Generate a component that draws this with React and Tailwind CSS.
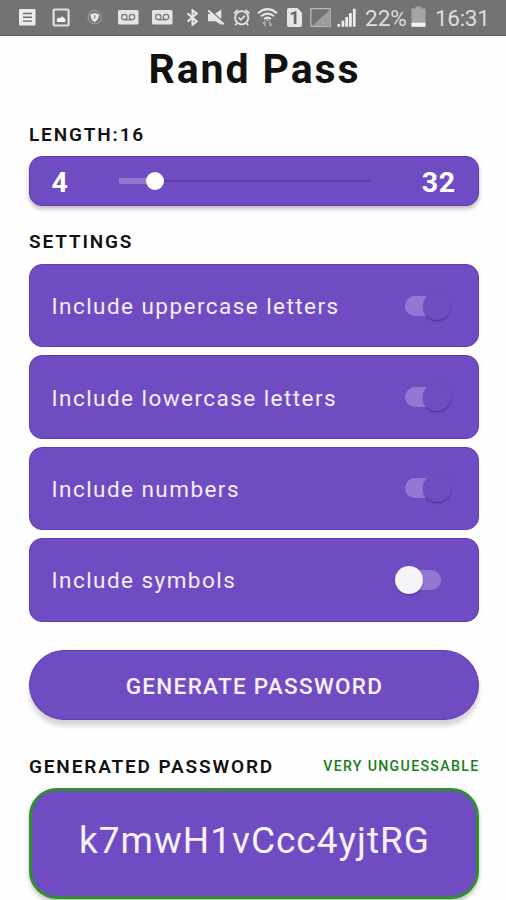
import React from "react";

function StatusBar() {
  return (
    <header className="flex h-[35.5px] items-start border-b border-[#5c5c5c] bg-[#737373] pl-[19px] text-[#dedede]">
      <svg className="mt-[9px] h-[17px] w-[17px] shrink-0" viewBox="0 0 17 17">
        <rect width="16.5" height="16.5" rx="1" fill="#ececec" />
        <path d="M4 4.5h9M4 8.3h9M4 12.1h9" stroke="#6b6b6b" strokeWidth="1.4" />
      </svg>
      <svg className="mt-2 ml-4 h-[19px] w-[18px] shrink-0" viewBox="0 0 18 19">
        <rect x="1.6" y="1.5" width="15" height="16" rx="1" fill="none" stroke="#e0e0e0" strokeWidth="2.2" />
        <path d="M4.8 14V11l2-1.6 1.3.8 2-2 3.3 3V14z" fill="#f5f5f5" />
      </svg>
      <svg className="mt-[10px] ml-[17px] h-[15px] w-[15px] shrink-0" viewBox="0 0 15 15">
        <circle cx="7.7" cy="7.3" r="6.6" fill="none" stroke="#a5a5a5" strokeWidth="1" />
        <path d="M7.7 3l4.3 1.3c0 4-1.3 6-4.3 8-3-2-4.3-4-4.3-8z" fill="#e8e8e8" />
        <path d="M7.7 5.2v3" stroke="#888" strokeWidth="1.4" />
      </svg>
      <Voicemail className="ml-4" />
      <Voicemail className="ml-[13px]" />
      <svg className="mt-[9px] ml-[13px] h-[17px] w-[13px] shrink-0" viewBox="0 0 13 17">
        <path d="M1.5 4.2l9.2 8.2-4.2 3.4V1.2l4.2 3.4-9.2 8.2" fill="none" stroke="#e6e6e6" strokeWidth="2" />
      </svg>
      <svg className="mt-[9px] ml-2 h-[17px] w-[18px] shrink-0" viewBox="0 0 18 17">
        <path d="M1 5h3.5l9.8 8.4V16L8.6 12.2H1zM8 4.8L14.3.5v9.4z" fill="#e6e6e6" />
        <path d="M1.2 1.5l15.6 13.8" stroke="#e6e6e6" strokeWidth="2.2" />
      </svg>
      <svg className="mt-[9px] ml-2 h-[17px] w-[18px] shrink-0" viewBox="0 0 18 17">
        <circle cx="8.7" cy="8.8" r="6.6" fill="none" stroke="#e6e6e6" strokeWidth="1.8" />
        <path d="M1 4.3L4.8.9M16.4 4.3L12.6.9M3.7 14.2l-1.5 2M13.7 14.2l1.5 2" stroke="#e6e6e6" strokeWidth="1.8" />
        <path d="M5.4 8.5l2.5 2.3 4-4.2" fill="none" stroke="#e6e6e6" strokeWidth="1.6" />
      </svg>
      <svg className="mt-2 ml-[6px] h-[19px] w-[21px] shrink-0" viewBox="0 0 21 19">
        <path d="M1 5.2q9.5-8 19 0M4 8.2q6.5-5.2 13 0M7 11q3.5-2.6 7 0" fill="none" stroke="#e6e6e6" strokeWidth="2.1" />
        <path d="M10.5 11.2l1.8 1.6H8.7z" fill="#e6e6e6" />
        <path d="M8 18.3v-4.5M5.8 15.6L8 13.4M12.8 13.4v4.5M15 15.8l-2.2 2.3" stroke="#a9a9a9" strokeWidth="1.7" />
      </svg>
      <div className="mt-2 ml-[9px] flex h-[19px] w-[15px] shrink-0 items-center justify-center rounded-[2px] bg-[#e6e6e6] text-[18px] leading-none font-bold text-[#666] [clip-path:polygon(0_0,70%_0,100%_25%,100%_100%,0_100%)]">
        1
      </div>
      <svg className="mt-2 ml-2 h-[19px] w-[21px] shrink-0" viewBox="0 0 21 19">
        <rect x=".8" y=".6" width="19.4" height="17.8" fill="none" stroke="#b8b8b8" strokeWidth="1.3" />
        <path d="M2.5 17.8L19.5 2v15.8z" fill="#9d9d9d" />
      </svg>
      <svg className="mt-2 ml-[6px] h-[19px] w-[19px] shrink-0" viewBox="0 0 19 19">
        <path d="M.5 16h2.6v2.8H.5zM4.5 12.7h2.8v6.1H4.5zM8.3 8.9h2.8v9.9H8.3zM12 4.9h2.8v13.9H12zM15.9.8h2.7v18h-2.7z" fill="#eee" />
      </svg>
      <span className="mt-1 ml-[9px] w-[42px] text-[22.5px] leading-7 whitespace-nowrap">22%</span>
      <svg className="mt-[6px] ml-[4px] h-[21px] w-[15px] shrink-0" viewBox="0 0 15 21">
        <path d="M.5 2.5h4V.6h6v1.9h4v18.2H.5z" fill="#a5a5a5" />
        <path d="M.5 16.8h14v3.9H.5z" fill="#f4f4f4" />
      </svg>
      <span className="mt-1 ml-[9px] text-[22.5px] leading-7 tracking-[-0.3px] whitespace-nowrap">16:31</span>
    </header>
  );
}

function Voicemail({ className }) {
  return (
    <svg className={`mt-[10px] h-[15px] w-[21px] shrink-0 ${className}`} viewBox="0 0 21 15">
      <rect width="20.5" height="14.5" rx="1.5" fill="#e4e4e4" />
      <circle cx="6.3" cy="7" r="2.7" fill="none" stroke="#777" strokeWidth="1.2" />
      <circle cx="14" cy="7" r="2.7" fill="none" stroke="#777" strokeWidth="1.2" />
      <path d="M6.3 9.8H14" stroke="#777" strokeWidth="1.2" />
    </svg>
  );
}

function Toggle({ on }) {
  return (
    <span
      className={
        on
          ? "mr-[37px] flex h-5 w-9 items-center justify-end rounded-full bg-[#9278d2]"
          : "mr-[37px] flex h-5 w-9 items-center rounded-full bg-[#9278d2]"
      }
    >
      <span
        className={
          on
            ? "-mr-[10px] size-7 shrink-0 rounded-full bg-[#704cc3] shadow-[0_1.5px_1.5px_rgba(50,20,110,0.45)]"
            : "-ml-[10px] size-7 shrink-0 rounded-full bg-[#f5f4f6] shadow-[0_1px_1.5px_rgba(50,20,110,0.5)]"
        }
      />
    </span>
  );
}

const settings = [
  { label: "Include uppercase letters", on: true },
  { label: "Include lowercase letters", on: true },
  { label: "Include numbers", on: true },
  { label: "Include symbols", on: false },
];

export default function App() {
  return (
    <div className="h-[900px] w-[506px] overflow-hidden bg-[#fefefe] font-['Roboto',sans-serif] text-[#111]">
      <StatusBar />
      <main className="flex flex-col pr-[27.5px] pl-[28.5px]">
        <h1 className="mt-[9.9px] h-12 pl-[2px] text-center text-[41px] leading-[48px] font-bold tracking-[1.9px] whitespace-nowrap">Rand Pass</h1>

        <h2 className="mt-[30px] h-6 pl-[0.5px] text-[19px] leading-6 font-semibold tracking-[1.85px]">LENGTH:16</h2>
        <section className="mt-[9.1px] flex h-[49.5px] items-center rounded-[13px] border border-[#6239b8] bg-[#704cc3] px-[22px] text-[28.5px] font-bold text-white shadow-[0_3px_4px_rgba(0,0,0,0.25)]">
          <span className="w-[67.5px] pt-[3px] leading-8">4</span>
          <div className="flex w-[251px] items-center">
            <div className="h-[6px] w-[27px] bg-[#9278d2]" />
            <div className="size-[18px] rounded-full bg-white" />
            <div className="h-[2px] flex-1 bg-[#5c3da3]" />
          </div>
          <span className="ml-auto pt-[3px] leading-8 tracking-[0.5px]">32</span>
        </section>

        <h2 className="mt-[24.5px] h-6 pl-[0.5px] text-[19px] leading-6 font-semibold tracking-[1.85px]">SETTINGS</h2>
        <div className="mt-[9.4px] flex flex-col gap-[7.8px]">
          {settings.map((s) => (
            <div key={s.label} className="flex h-[83.6px] items-center justify-between rounded-[13px] border border-[#6239b8] bg-[#704cc3] pl-[22px] text-[22.5px] tracking-[1.45px] text-[#f3eefb]">
              <span className="pt-[3px]">{s.label}</span>
              <Toggle on={s.on} />
            </div>
          ))}
        </div>

        <button className="mt-[28.6px] h-[70px] rounded-full border border-[#6239b8] bg-[#704cc3] pt-[3px] pl-[2px] text-[22.5px] font-medium tracking-[1.3px] text-[#f6f1fd] shadow-[0_6px_4px_rgba(0,0,0,0.16)]">
          GENERATE PASSWORD
        </button>

        <div className="mt-[34.4px] flex h-6 items-center justify-between pl-[0.5px]">
          <h2 className="text-[19px] leading-6 font-semibold tracking-[1.85px] whitespace-nowrap">GENERATED PASSWORD</h2>
          <span className="-mr-px pt-px text-[14.2px] font-medium tracking-[1.3px] whitespace-nowrap text-[#168016]">VERY UNGUESSABLE</span>
        </div>
        <div className="mt-[9px] flex h-[111px] items-center justify-center rounded-[28px] border-[3.5px] border-[#318e31] bg-[#704cc3] text-[37px] tracking-[1px] text-[#f6f1fd] shadow-[0_3px_4px_rgba(0,0,0,0.25)]">
          <span className="pb-[5px] pl-[2px]">k7mwH1vCcc4yjtRG</span>
        </div>
      </main>
    </div>
  );
}
